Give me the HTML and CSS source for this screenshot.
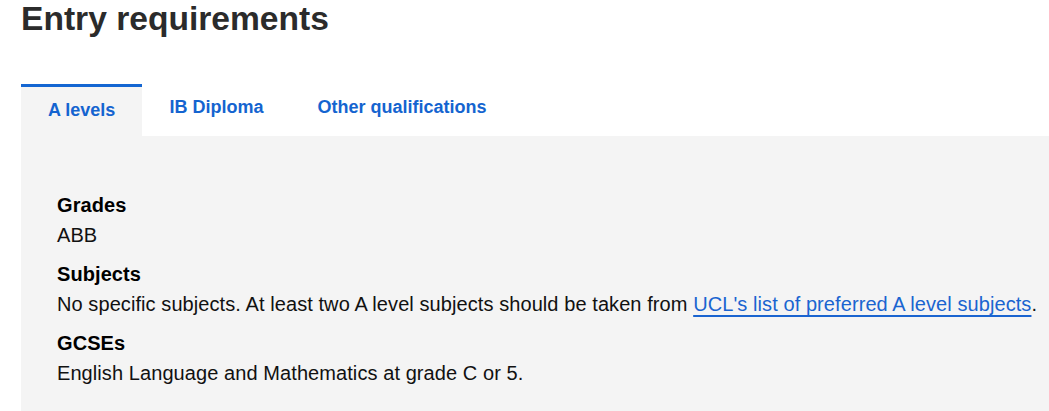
FILE: index.html
```html
<!DOCTYPE html>
<html lang="en">
<head>
<meta charset="utf-8">
<title>Entry requirements</title>
<link rel="stylesheet" href="styles.css">
</head>
<body>
<main class="page">
  <h1 class="title">Entry requirements</h1>
  <div class="tabs">
    <ul class="tab-list">
      <li class="tab tab-active"><a href="#">A levels</a></li>
      <li class="tab"><a href="#">IB Diploma</a></li>
      <li class="tab"><a href="#">Other qualifications</a></li>
    </ul>
    <div class="panel">
      <dl class="reqs">
        <dt>Grades</dt>
        <dd>ABB</dd>
        <dt>Subjects</dt>
        <dd>No specific subjects. At least two A level subjects should be taken from <a class="link" href="#">UCL's list of preferred A level subjects</a>.</dd>
        <dt>GCSEs</dt>
        <dd>English Language and Mathematics at grade C or 5.</dd>
      </dl>
    </div>
  </div>
</main>
</body>
</html>
```

FILE: styles.css
```css
html, body {
  margin: 0;
  padding: 0;
  background: #ffffff;
  overflow: hidden;
}

body {
  font-family: "Liberation Sans", Arial, sans-serif;
  color: #111111;
}

.page {
  padding-left: 21px;
}

.title {
  margin: 0;
  font-size: 33.6px;
  line-height: 38px;
  font-weight: 700;
  color: #2b2b2b;
  padding-top: 0;
}

.tabs {
  margin-top: 46px;
  width: max-content;
  min-width: calc(100vw - 21px);
}

.tab-list {
  display: flex;
  margin: 0;
  padding: 0;
  list-style: none;
  height: 52px;
  align-items: flex-start;
}

.tab a {
  display: block;
  padding: 10px 27px 0;
  font-size: 18px;
  line-height: 27px;
  font-weight: 700;
  color: #1464d0;
  text-decoration: none;
}

.tab-active {
  align-self: stretch;
  background: #f4f4f4;
  border-top: 3px solid #1466d2;
}

.panel {
  background: #f4f4f4;
  padding: 54px 36px 40px;
  min-height: 260px;
}

.reqs {
  margin: 0;
  font-size: 20px;
  line-height: 30px;
  letter-spacing: 0.08px;
}

.reqs dt {
  font-weight: 700;
  color: #000000;
  margin-top: 9px;
}

.reqs dt:first-child {
  margin-top: 0;
}

.reqs dd {
  margin: 0;
  color: #111111;
  white-space: nowrap;
}

.link {
  color: #1a64d0;
  text-decoration: underline;
  text-decoration-thickness: 2px;
  text-underline-offset: 4px;
}
```
